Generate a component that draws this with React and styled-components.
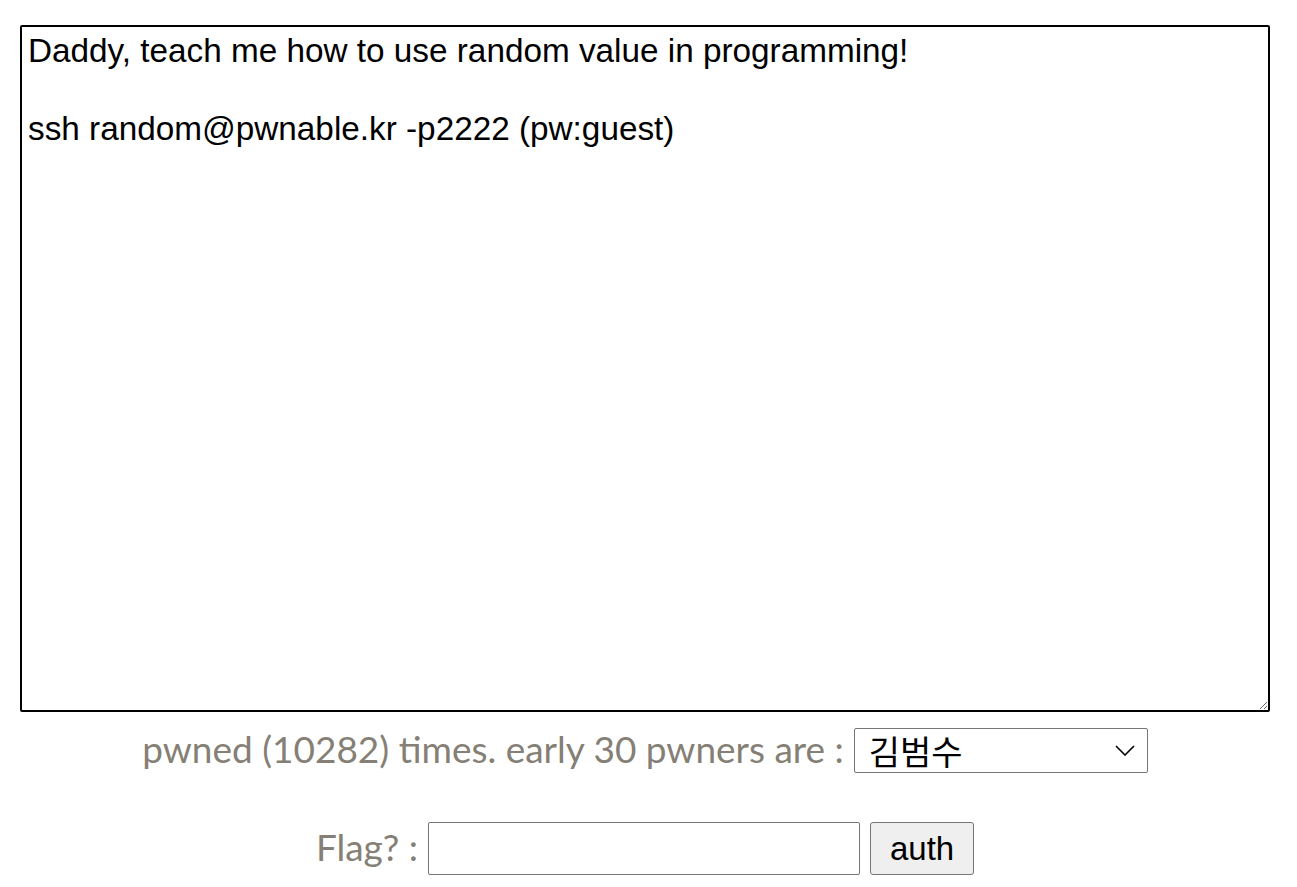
import React from "react";
import styled, {createGlobalStyle} from "styled-components";

const GlobalStyle = createGlobalStyle`
    html, body {
        margin: 0;
        padding: 0;
        background: #fff;
    }
    body {
        font-family: "Liberation Sans", Arial, sans-serif;
    }
`;

const Page = styled.div`
    width: 1290px;
    padding-top: 25px;
    display: flex;
    flex-direction: column;
    align-items: center;
`;

const Description = styled.textarea`
    box-sizing: border-box;
    width: 1250px;
    height: 687px;
    margin: 0;
    padding: 4px 6px;
    border: 2px solid #000;
    border-radius: 2px;
    font-family: "Liberation Sans", Arial, sans-serif;
    font-size: 33.3px;
    line-height: 39px;
    color: #000;
    resize: both;
    outline: none;
`;

const Row = styled.div`
    display: flex;
    align-items: center;
    gap: ${props => props.gap || 10}px;
    margin-top: ${props => props.top}px;
`;

const Label = styled.span`
    font-family: Lato, "Open Sans", sans-serif;
    font-size: 37px;
    line-height: 40px;
    padding-bottom: 3px;
    color: #857f76;
`;

const SelectWrap = styled.div`
    position: relative;
    display: flex;
`;

const Select = styled.select`
    appearance: none;
    box-sizing: border-box;
    width: 294px;
    height: 45px;
    padding: 0 40px 0 14px;
    border: 1px solid #767676;
    border-radius: 2px;
    background: #fff;
    font-family: "Noto Sans CJK KR", sans-serif;
    font-size: 34px;
    line-height: 43px;
    color: #000;
`;

const Chevron = styled.svg`
    position: absolute;
    right: 13px;
    top: 17px;
    pointer-events: none;
`;

const FlagInput = styled.input`
    box-sizing: border-box;
    width: 432px;
    height: 53px;
    border: 1px solid #767676;
    border-radius: 2px;
    padding: 0 6px;
    font-size: 33px;
`;

const AuthButton = styled.button`
    box-sizing: border-box;
    width: 104px;
    height: 53px;
    border: 1px solid #767676;
    border-radius: 3px;
    background: #efefef;
    font-family: "Liberation Sans", Arial, sans-serif;
    font-size: 33px;
    color: #000;
    padding: 0;
`;

const description = "Daddy, teach me how to use random value in programming!\n\nssh random@pwnable.kr -p2222 (pw:guest)";

export default function App() {
    return (
        <>
            <GlobalStyle/>
            <Page>
                <Description defaultValue={description}/>
                <Row top={16} gap={10}>
                    <Label>pwned (10282) times. early 30 pwners are :</Label>
                    <SelectWrap>
                        <Select defaultValue="김범수">
                            <option>김범수</option>
                        </Select>
                        <Chevron width="20" height="11" viewBox="0 0 20 11">
                            <path d="M1 1 L10 10 L19 1" fill="none" stroke="#000" strokeWidth="1.6"/>
                        </Chevron>
                    </SelectWrap>
                </Row>
                <Row top={49} gap={10}>
                    <Label>Flag? :</Label>
                    <FlagInput type="text"/>
                    <AuthButton>auth</AuthButton>
                </Row>
            </Page>
        </>
    );
}
